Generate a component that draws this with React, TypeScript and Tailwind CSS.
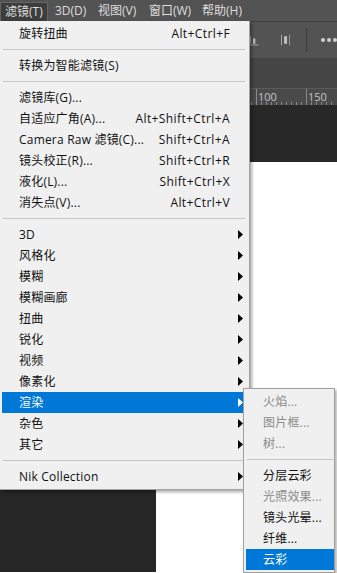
import React from "react";

type Item =
  | { sep: true }
  | { label: string; shortcut?: string; arrow?: boolean; active?: boolean; disabled?: boolean; sep?: false };

const mainItems: Item[] = [
  { label: "旋转扭曲", shortcut: "Alt+Ctrl+F" },
  { sep: true },
  { label: "转换为智能滤镜(S)" },
  { sep: true },
  { label: "滤镜库(G)..." },
  { label: "自适应广角(A)...", shortcut: "Alt+Shift+Ctrl+A" },
  { label: "Camera Raw 滤镜(C)...", shortcut: "Shift+Ctrl+A" },
  { label: "镜头校正(R)...", shortcut: "Shift+Ctrl+R" },
  { label: "液化(L)...", shortcut: "Shift+Ctrl+X" },
  { label: "消失点(V)...", shortcut: "Alt+Ctrl+V" },
  { sep: true },
  { label: "3D", arrow: true },
  { label: "风格化", arrow: true },
  { label: "模糊", arrow: true },
  { label: "模糊画廊", arrow: true },
  { label: "扭曲", arrow: true },
  { label: "锐化", arrow: true },
  { label: "视频", arrow: true },
  { label: "像素化", arrow: true },
  { label: "渲染", arrow: true, active: true },
  { label: "杂色", arrow: true },
  { label: "其它", arrow: true },
  { sep: true },
  { label: "Nik Collection", arrow: true },
];

const subItems: Item[] = [
  { label: "火焰...", disabled: true },
  { label: "图片框...", disabled: true },
  { label: "树...", disabled: true },
  { sep: true },
  { label: "分层云彩" },
  { label: "光照效果...", disabled: true },
  { label: "镜头光晕..." },
  { label: "纤维..." },
  { label: "云彩", active: true },
];

const font = { fontFamily: '"Open Sans", "Noto Sans CJK SC", sans-serif' };

function Arrow({ white }: { white?: boolean }) {
  return (
    <svg width="5" height="9" viewBox="0 0 5 9">
      <path d="M0 0 L5 4.5 L0 9 Z" fill={white ? "#ffffff" : "#000000"} />
    </svg>
  );
}

function MenuRows({ items, sub }: { items: Item[]; sub?: boolean }) {
  return (
    <>
      {items.map((it, i) => {
        if (it.sep) {
          return (
            <div key={i} className="h-[11px] flex items-center">
              <div className={sub ? "h-px bg-[#c6c6c6] ml-[1px] w-full" : "h-px bg-[#c6c6c6] ml-[1px] mr-[-3px] w-full"} />
            </div>
          );
        }
        return (
          <div
            key={i}
            className={`flex items-center h-[21px] pl-[17px] pr-[1px] text-[12px] ${
              it.active ? "bg-[#0078d7] text-white" : it.disabled ? "text-[#8b8b8b]" : "text-[#111]"
            }`}
          >
            <span className="flex-1 whitespace-nowrap tracking-[0.2px]">{it.label}</span>
            {it.shortcut && <span className="whitespace-nowrap tracking-[0.4px]">{it.shortcut}</span>}
            {!sub && (
              <span className="w-[13px] flex justify-end">{it.arrow && <Arrow white={it.active} />}</span>
            )}
          </div>
        );
      })}
    </>
  );
}

export default function App() {
  const minorTicks = Array.from({ length: 18 }, (_, i) => 246 + i * 5);
  return (
    <div className="relative w-[337px] h-[573px] overflow-hidden bg-white" style={font}>
      {/* menu bar */}
      <div className="flex h-[21px] bg-[#535353] text-[12px] text-[#dedede] whitespace-nowrap">
        <div className="flex items-center w-[48px] pl-[4px] mt-[2px] bg-[#3d3d3d] border border-[#656565] border-b-0">滤镜(T)</div>
        <div className="flex items-center w-[44px] pl-[7px]">3D(D)</div>
        <div className="flex items-center w-[51px] pl-[6px]">视图(V)</div>
        <div className="flex items-center w-[53px] pl-[6px]">窗口(W)</div>
        <div className="flex items-center pl-[6px]">帮助(H)</div>
      </div>

      {/* options bar */}
      <div className="h-px bg-[#3e3e3e]" />
      <div className="h-[36px] bg-[#535353] flex items-center pl-[247px] gap-[22px]">
        <svg width="16" height="16" viewBox="0 0 16 16">
          <rect x="2" y="3" width="3" height="10" fill="#bdbdbd" />
          <rect x="8" y="6" width="3" height="7" fill="#bdbdbd" />
          <rect x="0" y="14" width="15" height="1" fill="#bdbdbd" />
        </svg>
        <svg width="12" height="16" viewBox="0 0 12 16">
          <rect x="0" y="1" width="1" height="14" fill="#bdbdbd" />
          <rect x="4" y="3" width="4" height="10" fill="#bdbdbd" />
          <rect x="11" y="1" width="1" height="14" fill="#bdbdbd" />
        </svg>
        <div className="w-px h-[24px] bg-[#3a3a3a] ml-[-6px]" />
        <div className="flex gap-[2px] ml-[-8px]">
          <div className="w-[4px] h-[4px] rounded-full bg-[#cfcfcf]" />
          <div className="w-[4px] h-[4px] rounded-full bg-[#cfcfcf]" />
          <div className="w-[4px] h-[4px] rounded-full bg-[#cfcfcf]" />
        </div>
      </div>

      {/* tabs area */}
      <div className="h-[30px] bg-[#454545]" />

      {/* ruler */}
      <div className="relative h-[17px] bg-[#4a4a4a] border-t border-[#5a5a5a] text-[11px] text-[#c4c4c4] leading-none">
        <div className="absolute left-[256px] top-0 w-px h-full bg-[#8a8a8a]" />
        <div className="absolute left-[306px] top-0 w-px h-full bg-[#8a8a8a]" />
        {minorTicks.map((x) => (
          <div key={x} className="absolute bottom-0 w-px h-[3px] bg-[#8a8a8a]" style={{ left: x }} />
        ))}
        <span className="absolute left-[258px] top-[2px]">100</span>
        <span className="absolute left-[308px] top-[2px]">150</span>
      </div>

      {/* canvas dark strip */}
      <div className="h-[57px] bg-[#282828]" />

      {/* lower area */}
      <div className="h-[410px] flex flex-col justify-end">
        <div className="w-[156px] h-[84px] bg-[#262626]" />
      </div>

      {/* main dropdown */}
      <div className="absolute left-0 top-[21px] w-[250px] bg-[#f0f0f0] border-r border-b border-[#a0a0a0] pt-[2px] pb-[2px] pl-[2px] pr-[5px] shadow-[2px_2px_3px_rgba(0,0,0,0.35)]">
        <MenuRows items={mainItems} />
      </div>

      {/* render submenu */}
      <div className="absolute left-[243px] top-[388px] w-[92px] bg-[#f0f0f0] border border-[#a0a0a0] pt-[2px] pb-[2px] pl-[2px] shadow-[2px_2px_3px_rgba(0,0,0,0.3)]">
        <MenuRows items={subItems} sub />
      </div>
    </div>
  );
}
